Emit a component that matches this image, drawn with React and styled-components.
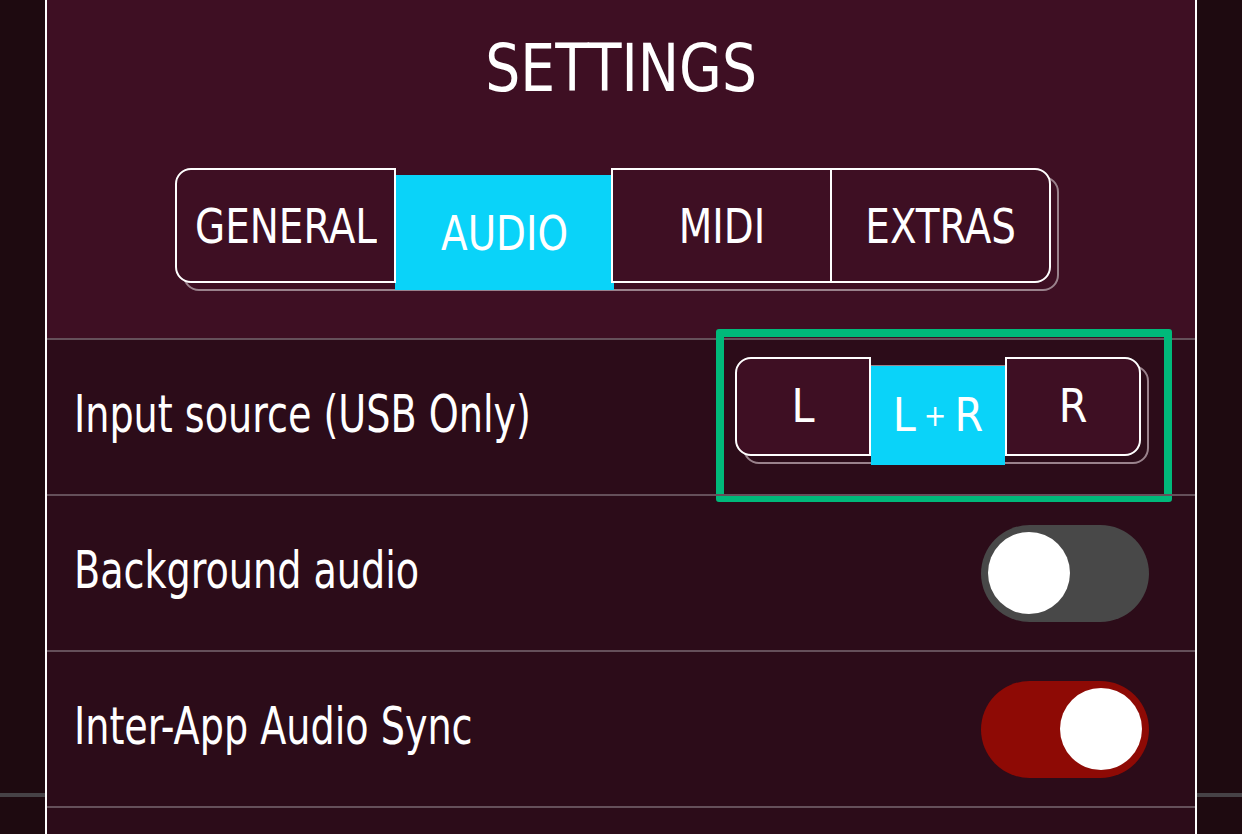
import React from 'react'
import styled, { createGlobalStyle } from 'styled-components'

const GlobalStyle = createGlobalStyle`
    html, body {
        margin: 0;
        padding: 0;
    }
    body {
        width: 1242px;
        height: 834px;
        overflow: hidden;
        background:
            linear-gradient(to bottom, transparent 793px, #464246 793px, #464246 797px, transparent 797px),
            #1e0a10;
        font-family: "Liberation Sans Narrow", "DejaVu Sans Condensed", "Liberation Sans", sans-serif;
        color: #fff;
    }
`

// the reference uses a narrow DIN face, squeeze the installed condensed one
const Narrow = styled.span`
    display: inline-block;
    white-space: nowrap;
    transform: scaleX(${p => p.x || 0.85});
    transform-origin: ${p => p.origin || 'center'} center;
`

const Panel = styled.div`
    width: 1148px;
    height: 834px;
    margin: 0 auto;
    border-left: 2px solid #fff;
    border-right: 2px solid #fff;
    background: #2c0c19;
    display: flex;
    flex-direction: column;
    overflow: hidden;
`

const Header = styled.div`
    flex-shrink: 0;
    background: #3e0f23;
    padding: 36px 0 47px;
    display: flex;
    flex-direction: column;
    align-items: center;
`

const Title = styled.h1`
    margin: 0;
    font-size: 66px;
    line-height: 66px;
    font-weight: 400;
`

const TabBar = styled.div`
    position: relative;
    display: flex;
    margin: 66px 16px 8px 0;
    height: 115px;

    &::before {
        content: '';
        position: absolute;
        top: 8px;
        left: 8px;
        right: -8px;
        bottom: -8px;
        border: 2px solid #9a828c;
        border-radius: 16px;
    }
`

const Tab = styled.div`
    position: relative;
    box-sizing: border-box;
    width: ${p => p.width}px;
    height: 115px;
    margin-left: -2px;
    display: flex;
    align-items: center;
    justify-content: center;
    font-size: 48px;
    background: ${p => (p.active ? '#0ad3f9' : '#3e0f23')};
    border: ${p => (p.active ? 'none' : '2px solid #fff')};
    border-radius: ${p => p.radius || '0'};
    transform: ${p => (p.active ? 'translate(1px, 7px)' : 'none')};
    z-index: ${p => (p.active ? 0 : 1)};

    &:first-child {
        margin-left: 0;
    }
`

const Row = styled.div`
    position: relative;
    flex-shrink: 0;
    box-sizing: border-box;
    height: 156px;
    border-top: 2px solid #65505a;
    display: flex;
    align-items: center;
    justify-content: space-between;
    padding: 0 46px 0 27px;
`

const Label = styled.span`
    font-size: 52px;
    margin-top: -6px;
`

const Highlight = styled.div`
    position: absolute;
    left: 669px;
    top: -11px;
    width: 456px;
    height: 173px;
    box-sizing: border-box;
    border: 8px solid #00b97a;
    border-radius: 3px;
    pointer-events: none;
`

const Segment = styled.div`
    position: relative;
    display: flex;
    height: 99px;
    margin: 0 8px 0 0;
    transform: translateY(-11px);

    &::before {
        content: '';
        position: absolute;
        top: 8px;
        left: 8px;
        right: -8px;
        bottom: -8px;
        border: 2px solid #9a828c;
        border-radius: 16px;
    }
`

const SegButton = styled.div`
    position: relative;
    box-sizing: border-box;
    width: ${p => p.width}px;
    height: 99px;
    display: flex;
    align-items: center;
    justify-content: center;
    font-size: 46px;
    background: ${p => (p.active ? '#0ad3f9' : '#3e0f23')};
    border: ${p => (p.active ? 'none' : '2px solid #fff')};
    border-radius: ${p => p.radius || '0'};
    transform: ${p => (p.active ? 'translateY(9px)' : 'none')};
    z-index: ${p => (p.active ? 0 : 1)};
`

const Plus = styled.span`
    font-size: 30px;
    margin: 0 8px;
`

const Track = styled.div`
    box-sizing: border-box;
    width: 168px;
    height: 97px;
    border-radius: 49px;
    padding: 0 7px;
    background: ${p => (p.on ? '#8e0a05' : '#484848')};
    display: flex;
    align-items: center;
    justify-content: ${p => (p.on ? 'flex-end' : 'flex-start')};
`

const Knob = styled.div`
    width: 82px;
    height: 82px;
    border-radius: 50%;
    background: #fff;
`

const Toggle = ({ on }) => (
    <Track on={on}>
        <Knob />
    </Track>
)

const tabs = [
    { name: 'GENERAL', width: 221, radius: '16px 0 0 16px' },
    { name: 'AUDIO', width: 219, active: true },
    { name: 'MIDI', width: 221 },
    { name: 'EXTRAS', width: 221, radius: '0 16px 16px 0' },
]

const App = () => (
    <>
        <GlobalStyle />
        <Panel>
            <Header>
                <Title><Narrow x={0.93}>SETTINGS</Narrow></Title>
                <TabBar>
                    {tabs.map(t => (
                        <Tab key={t.name} width={t.width} radius={t.radius} active={t.active}>
                            <Narrow x={0.9}>{t.name}</Narrow>
                        </Tab>
                    ))}
                </TabBar>
            </Header>
            <Row>
                <Label><Narrow x={0.815} origin="left">Input source (USB Only)</Narrow></Label>
                <Segment>
                    <SegButton width={136} radius="16px 0 0 16px">L</SegButton>
                    <SegButton width={134} active>
                        L<Plus>+</Plus>R
                    </SegButton>
                    <SegButton width={136} radius="0 16px 16px 0">R</SegButton>
                </Segment>
                <Highlight />
            </Row>
            <Row>
                <Label><Narrow x={0.815} origin="left">Background audio</Narrow></Label>
                <Toggle />
            </Row>
            <Row>
                <Label><Narrow x={0.815} origin="left">Inter-App Audio Sync</Narrow></Label>
                <Toggle on />
            </Row>
            <Row />
        </Panel>
    </>
)

export default App
